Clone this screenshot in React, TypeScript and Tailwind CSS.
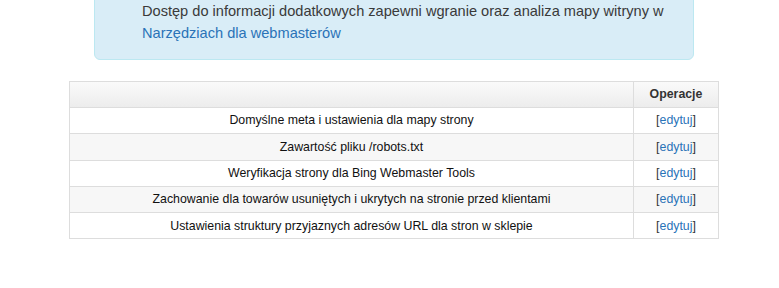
import React from "react";

const rows = [
  "Domyślne meta i ustawienia dla mapy strony",
  "Zawartość pliku /robots.txt",
  "Weryfikacja strony dla Bing Webmaster Tools",
  "Zachowanie dla towarów usuniętych i ukrytych na stronie przed klientami",
  "Ustawienia struktury przyjaznych adresów URL dla stron w sklepie",
];

export default function App() {
  return (
    <div className="w-[779px] h-[288px] bg-white overflow-hidden" style={{ fontFamily: '"Liberation Sans", Arial, sans-serif' }}>
      <div className="ml-[94px] w-[600px] h-[61px] mt-[-1px] bg-[#d9edf7] border border-[#bce8f1] rounded-b-[6px] pl-[47px] pt-0 text-[14.6px] leading-[22px] text-[#3a3a3a]">
        Dostęp do informacji dodatkowych zapewni wgranie oraz analiza mapy witryny w{" "}
        <a className="text-[#2a73b8]">Narzędziach dla webmasterów</a>
      </div>
      <table className="ml-[69px] mt-[21px] w-[650px] border-collapse text-[12.35px] text-[#111]">
        <thead>
          <tr className="h-[26px] bg-gradient-to-b from-[#fafafa] to-[#ececec]">
            <th className="border border-[#dddddd] p-0"></th>
            <th className="border border-[#dddddd] w-[85px] p-0 font-bold text-[#333]">Operacje</th>
          </tr>
        </thead>
        <tbody>
          {rows.map((r, i) => (
            <tr key={i} className={i % 2 === 1 ? "h-[26.3px] bg-[#f7f7f7]" : "h-[26.3px] bg-white"}>
              <td className="border border-[#dddddd] p-0 text-center">{r}</td>
              <td className="border border-[#dddddd] p-0 text-center text-[#333]">
                [<a className="text-[#2a73b8]">edytuj</a>]
              </td>
            </tr>
          ))}
        </tbody>
      </table>
    </div>
  );
}
